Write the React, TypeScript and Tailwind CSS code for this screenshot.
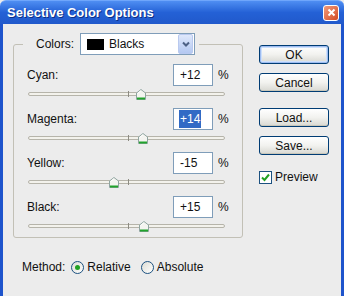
import React from 'react';

const font = { fontFamily: '"Liberation Sans", Arial, sans-serif' };

const XpButton = ({ label, isDefault = false }: { label: string; isDefault?: boolean }) => (
  <button
    className={`w-[70px] h-[19px] rounded-[3px] border border-[#003c74] bg-gradient-to-b from-[#ffffff] via-[#f2f2ef] to-[#d8d8d2] text-[12px] leading-none text-[#111] flex items-center justify-center ${
      isDefault ? 'shadow-[inset_0_0_0_1px_#9ebcf0,inset_0_0_0_2px_#cde0fb]' : 'shadow-[inset_0_-1px_0_#c9c7ba]'
    }`}
  >
    {label}
  </button>
);

const Thumb = () => (
  <svg width="10" height="11" viewBox="0 0 10 11">
    <path d="M0.5 4 L5 0.5 L9.5 4 V10.5 H0.5 Z" fill="#f4f4f0" stroke="#8fa4a0" />
    <path d="M1 9.5 H9" stroke="#21a32c" strokeWidth="2" />
    <path d="M1.5 4.5 L5 1.7" stroke="#ffffff" />
  </svg>
);

const Slider = ({ value }: { value: number }) => (
  <div className="relative h-[16px] w-[199px]">
    <div className="absolute left-[1px] top-[6px] w-[197px] h-[4px] rounded-full border border-[#b6b4aa] bg-[#f3f2ec]" />
    <div className="absolute left-[101px] top-[5px] w-px h-[6px] bg-[#8d8b82]" />
    <div className="absolute top-[3px]" style={{ left: 101 + value - 4.5 }}>
      <Thumb />
    </div>
  </div>
);

const ColorRow = ({
  label,
  value,
  selected = false,
}: {
  label: string;
  value: number;
  selected?: boolean;
}) => {
  const text = value > 0 ? `+${value}` : `${value}`;
  return (
    <div className="flex flex-col">
      <div className="h-[22px] flex items-center">
        <span className="w-[146px] text-[12px] text-[#111]">{label}</span>
        <div className="w-[40px] h-[22px] border border-[#7f9db9] bg-white flex items-center pl-[6px] text-[12px]">
          <span className={selected ? 'bg-[#316ac5] text-white px-px -ml-px' : 'text-[#111]'}>{text}</span>
        </div>
        <span className="ml-[5px] text-[12px] text-[#111]">%</span>
      </div>
      <Slider value={value} />
    </div>
  );
};

const Radio = ({ checked }: { checked: boolean }) => (
  <span className="w-[13px] h-[13px] rounded-full border border-[#1c5180] bg-gradient-to-br from-[#dcdcd4] to-[#ffffff] flex items-center justify-center">
    {checked && <span className="w-[5px] h-[5px] rounded-full bg-[#21a121]" />}
  </span>
);

export default function App() {
  return (
    <div className="w-[344px] h-[296px] overflow-hidden bg-[#ececec]" style={font}>
      {/* title bar */}
      <div className="h-[24px] flex items-center justify-between pl-[7px] pr-[5px] rounded-t-[6px] bg-gradient-to-b from-[#4f8ef2] via-[#2461d6] to-[#2159cb] border-t border-[#6fa6fb]">
        <span className="text-white font-bold text-[13px] [text-shadow:1px_1px_0_#0c2f86]">
          Selective Color Options
        </span>
        <span className="w-[16px] h-[16px] rounded-[3px] border border-white bg-gradient-to-br from-[#f09a7a] to-[#d2481f] flex items-center justify-center">
          <svg width="9" height="9" viewBox="0 0 9 9">
            <path d="M1.5 1.5 L7.5 7.5 M7.5 1.5 L1.5 7.5" stroke="#fff" strokeWidth="2" />
          </svg>
        </span>
      </div>

      <div className="flex h-[272px] border-x-[3px] border-[#1e54cc]">
        {/* left column */}
        <div className="w-[237px] pl-[10px] pt-[9px] flex flex-col">
          <fieldset className="w-[227px] border border-[#c2c0b6] rounded-[3px] px-[13px] pb-[3px]">
            <legend className="-ml-[4px] pl-[13px] pr-[4px] flex items-center">
              <span className="text-[12px] text-[#111] w-[44px]">Colors:</span>
              <div className="w-[115px] h-[22px] border border-[#7f9db9] bg-white flex items-center">
                <span className="ml-[6px] w-[17px] h-[11px] bg-black" />
                <span className="ml-[5px] flex-1 text-[12px] text-[#111]">Blacks</span>
                <span className="w-[15px] h-[20px] mr-px rounded-[2px] border border-[#b9c9ef] bg-gradient-to-b from-[#dfe8fb] to-[#b4c8f1] flex items-center justify-center">
                  <svg width="8" height="6" viewBox="0 0 8 6">
                    <path d="M1 1.5 L4 4.5 L7 1.5" stroke="#4d6185" strokeWidth="2" fill="none" />
                  </svg>
                </span>
              </div>
            </legend>
            <div className="mt-[9px] flex flex-col gap-[6px]">
              <ColorRow label="Cyan:" value={12} />
              <ColorRow label="Magenta:" value={14} selected />
              <ColorRow label="Yellow:" value={-15} />
              <ColorRow label="Black:" value={15} />
            </div>
          </fieldset>

          <div className="mt-[19px] ml-[9px] h-[20px] flex items-center text-[12px] text-[#111]">
            <span>Method:</span>
            <span className="ml-[6px]"><Radio checked /></span>
            <span className="ml-[3px]">Relative</span>
            <span className="ml-[10px]"><Radio checked={false} /></span>
            <span className="ml-[3px]">Absolute</span>
          </div>
        </div>

        {/* right column */}
        <div className="ml-[19px] pt-[21px] flex flex-col">
          <XpButton label="OK" isDefault />
          <div className="mt-[9px]"><XpButton label="Cancel" /></div>
          <div className="mt-[16px]"><XpButton label="Load..." /></div>
          <div className="mt-[9px]"><XpButton label="Save..." /></div>
          <div className="mt-[13px] flex items-center">
            <span className="w-[13px] h-[13px] border border-[#1c5180] bg-white flex items-center justify-center">
              <svg width="9" height="9" viewBox="0 0 9 9">
                <path d="M1 4.5 L3.5 7 L8 1.5" stroke="#21a121" strokeWidth="2" fill="none" />
              </svg>
            </span>
            <span className="ml-[3px] text-[12px] text-[#111]">Preview</span>
          </div>
        </div>
      </div>
    </div>
  );
}
